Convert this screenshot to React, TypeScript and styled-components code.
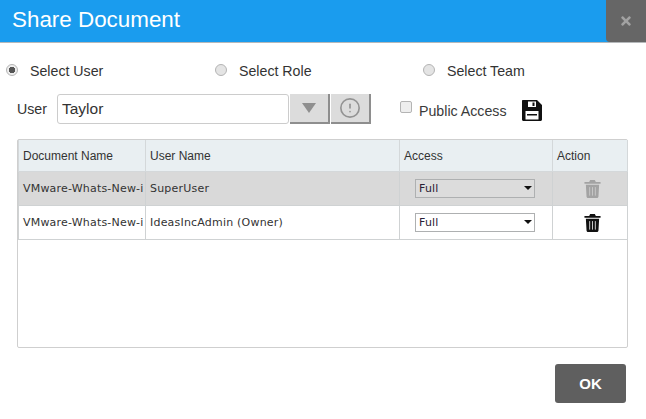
import styled, { createGlobalStyle } from "styled-components";
import { FaTimes } from "react-icons/fa";
import { CircleAlert } from "lucide-react";

const GlobalStyle = createGlobalStyle`
  html, body {
    margin: 0;
    padding: 0;
    background: #fff;
    font-family: "Liberation Sans", Arial, sans-serif;
  }
`;

const Dialog = styled.div`
  width: 646px;
  height: 419px;
  overflow: hidden;
  display: flex;
  flex-direction: column;
  color: #333;
`;

const Header = styled.header`
  height: 42px;
  flex-shrink: 0;
  display: flex;
  justify-content: space-between;
  background: #1a9cee;
  border-bottom: 1px solid #b5b8ba;
`;

const Title = styled.h1`
  margin: 0;
  padding-left: 12px;
  font-size: 22.4px;
  font-weight: 400;
  line-height: 39px;
  color: #fff;
`;

const CloseButton = styled.button`
  width: 40px;
  height: 42px;
  padding: 0;
  border: 0;
  border-radius: 0 0 0 4px;
  background: #666;
  color: #a2a2a2;
  font-size: 14px;
  display: flex;
  align-items: center;
  justify-content: center;
`;

const Body = styled.div`
  flex: 1;
  display: flex;
  flex-direction: column;
  padding: 18px 18px 0 17px;
`;

const RadioRow = styled.div`
  display: grid;
  grid-template-columns: 209px 208px auto;
  margin-left: -11px;
  height: 20px;
  align-items: center;
`;

const RadioLabel = styled.label`
  display: flex;
  align-items: center;
  gap: 12px;
  font-size: 14.2px;
`;

const RadioDot = styled.span<{ $checked?: boolean }>`
  width: 12px;
  height: 12px;
  margin-top: -3px;
  box-sizing: border-box;
  border-radius: 50%;
  border: 1px solid #b4b4b4;
  background: ${({ $checked }) =>
    $checked ? "radial-gradient(circle, #555 0 3px, #eee 3.5px)" : "#e4e4e4"};
`;

const UserRow = styled.div`
  display: flex;
  align-items: center;
  margin-top: 13px;
  height: 30px;
`;

const UserLabel = styled.span`
  width: 40px;
  font-size: 14.2px;
`;

const UserInput = styled.input`
  width: 232px;
  height: 30px;
  box-sizing: border-box;
  padding: 0 4px;
  border: 1px solid #ccc;
  border-radius: 3px;
  font: 15.5px "Liberation Sans", Arial, sans-serif;
  color: #333;
  outline: none;
`;

const IconButton = styled.button`
  width: 40px;
  height: 30px;
  margin-left: 1px;
  padding: 0;
  box-sizing: border-box;
  border: 0;
  border-right: 2px solid #8e8e8e;
  border-bottom: 2px solid #8e8e8e;
  background: #dcdcdc;
  color: #939393;
  display: flex;
  align-items: center;
  justify-content: center;
`;

const ArrowDown = styled.span`
  width: 0;
  height: 0;
  border-left: 7px solid transparent;
  border-right: 7px solid transparent;
  border-top: 10px solid #8f8f8f;
`;

const PublicAccess = styled.label`
  display: flex;
  align-items: center;
  margin-left: 29px;
  padding-top: 3px;
  font-size: 14.2px;
  color: #3a3a3a;
`;

const CheckBox = styled.span`
  width: 12px;
  height: 12px;
  margin: -7px 7px 0 0;
  box-sizing: border-box;
  border: 1px solid #b4b4b4;
  border-radius: 2px;
  background: #eee;
`;

const SaveGlyph = styled.svg`
  width: 20px;
  height: 21px;
  margin: 2px 0 0 15px;
`;

const TableFrame = styled.div`
  height: 209px;
  margin-top: 15px;
  box-sizing: border-box;
  border: 1px solid #cfcfcf;
  border-radius: 2px;
  padding-right: 1px;
`;

const Table = styled.table`
  width: 609px;
  table-layout: fixed;
  border-collapse: collapse;
`;

const HeadCell = styled.th<{ $width: number }>`
  width: ${({ $width }) => $width}px;
  height: 31px;
  box-sizing: border-box;
  padding: 2px 4px 0;
  background: #e9eff2;
  border: 1px solid #d4d8da;
  border-top: 0;
  font-size: 12px;
  font-weight: 400;
  text-align: left;
  color: #333;
`;

const Row = styled.tr<{ $selected?: boolean }>`
  height: 34px;
  background: ${({ $selected }) => ($selected ? "#d9d9d9" : "#fff")};
`;

const Cell = styled.td`
  box-sizing: border-box;
  padding: 0 4px;
  border: 1px solid #cfd2d3;
  font: 11px "DejaVu Sans", Verdana, sans-serif;
  letter-spacing: 0.2px;
  white-space: nowrap;
  overflow: hidden;
  color: #333;
`;

const CenterCell = styled(Cell)`
  padding: 0 0 0 5px;
  text-align: center;
`;

const AccessSelect = styled.div<{ $selected?: boolean }>`
  width: 120px;
  height: 19px;
  margin-left: 11px;
  box-sizing: border-box;
  padding: 0 2px 0 3px;
  display: flex;
  align-items: center;
  justify-content: space-between;
  border: 1px solid #aeb0b1;
  background: ${({ $selected }) => ($selected ? "#dcdcdc" : "#fff")};
  font: 11px "DejaVu Sans", Verdana, sans-serif;
  color: #2a2035;
`;

const SelectArrow = styled.span`
  width: 0;
  height: 0;
  border-left: 4px solid transparent;
  border-right: 4px solid transparent;
  border-top: 4px solid #111;
`;

const TrashGlyph = styled.svg<{ $muted?: boolean }>`
  display: block;
  margin: 1px auto 0;
  width: 17px;
  height: 18px;
  color: ${({ $muted }) => ($muted ? "#a3a3a3" : "#111")};
`;

const Footer = styled.div`
  display: flex;
  justify-content: flex-end;
  margin-top: 16px;
  padding-right: 2px;
`;

const OkButton = styled.button`
  width: 71px;
  height: 39px;
  border: 0;
  border-radius: 3px;
  background: #5f5f5f;
  color: #fff;
  font: 700 15px "Liberation Sans", Arial, sans-serif;
`;

const rows = [
  { user: "SuperUser", selected: true },
  { user: "IdeasIncAdmin (Owner)", selected: false },
];

function TrashIcon({ muted }: { muted?: boolean }) {
  return (
    <TrashGlyph $muted={muted} viewBox="0 0 17 19" aria-hidden="true">
      <path
        fill="currentColor"
        d="M6 0h5l1 2h5v2H0V2h5zM1.5 5h14l-.7 12.4c0 .9-.7 1.6-1.6 1.6H3.8c-.9 0-1.6-.7-1.6-1.6z"
      />
      <path
        stroke="#fff"
        strokeOpacity={muted ? 0.45 : 0.9}
        strokeWidth="0.9"
        d="M5.5 7.500v9M8.500 7.500v9M11.500 7.500v9"
      />
    </TrashGlyph>
  );
}

function SaveIcon() {
  return (
    <SaveGlyph viewBox="0 0 20 21" aria-hidden="true">
      <path
        fill="#111"
        fillRule="evenodd"
        d="M1 0h14l5 5v14.500c0 .8-.7 1.500-1.500 1.500h-17C.7 21 0 20.300 0 19.500V1C0 .4.400 0 1 0zM6 1.500V7h8V1.500zM3.500 11v8.500h13V11z"
      />
      <path fill="#111" d="M10.500 2.500h2v3.500h-2zM5 14h10v1.500H5z" />
    </SaveGlyph>
  );
}

export default function App() {
  return (
    <Dialog>
      <GlobalStyle />
      <Header>
        <Title>Share Document</Title>
        <CloseButton aria-label="Close">
          <FaTimes />
        </CloseButton>
      </Header>
      <Body>
        <RadioRow>
          <RadioLabel>
            <RadioDot $checked />
            Select User
          </RadioLabel>
          <RadioLabel>
            <RadioDot />
            Select Role
          </RadioLabel>
          <RadioLabel>
            <RadioDot />
            Select Team
          </RadioLabel>
        </RadioRow>
        <UserRow>
          <UserLabel>User</UserLabel>
          <UserInput defaultValue="Taylor" />
          <IconButton aria-label="Open list">
            <ArrowDown />
          </IconButton>
          <IconButton aria-label="Info">
            <CircleAlert size={22} strokeWidth={1.8} />
          </IconButton>
          <PublicAccess>
            <CheckBox />
            Public Access
          </PublicAccess>
          <SaveIcon />
        </UserRow>
        <TableFrame>
          <Table>
            <thead>
              <tr>
                <HeadCell $width={127}>Document Name</HeadCell>
                <HeadCell $width={254}>User Name</HeadCell>
                <HeadCell $width={153}>Access</HeadCell>
                <HeadCell $width={75}>Action</HeadCell>
              </tr>
            </thead>
            <tbody>
              {rows.map((row) => (
                <Row key={row.user} $selected={row.selected}>
                  <Cell>VMware-Whats-New-i</Cell>
                  <Cell>{row.user}</Cell>
                  <Cell>
                    <AccessSelect $selected={row.selected}>
                      Full
                      <SelectArrow />
                    </AccessSelect>
                  </Cell>
                  <CenterCell>
                    <TrashIcon muted={row.selected} />
                  </CenterCell>
                </Row>
              ))}
            </tbody>
          </Table>
        </TableFrame>
        <Footer>
          <OkButton>OK</OkButton>
        </Footer>
      </Body>
    </Dialog>
  );
}
